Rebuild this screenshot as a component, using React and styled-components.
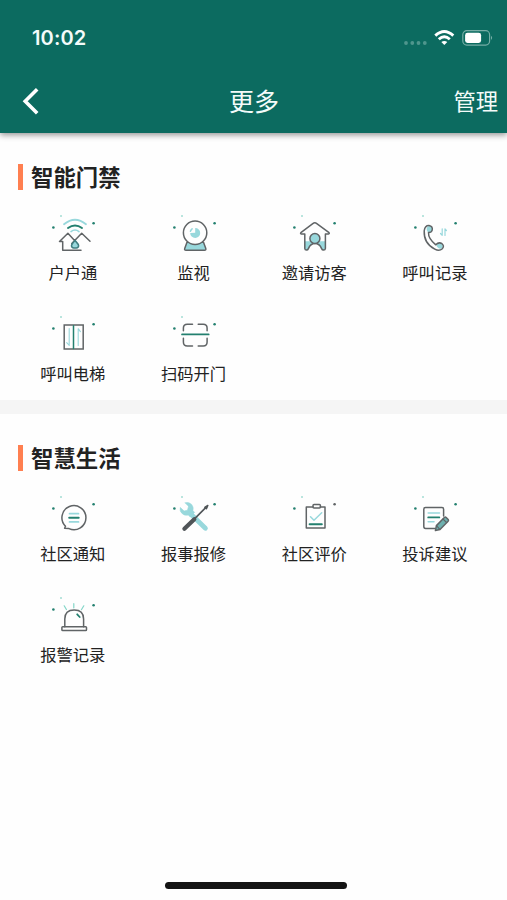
import React from 'react';
import styled, { createGlobalStyle } from 'styled-components';

const GlobalStyle = createGlobalStyle`
  * { box-sizing: border-box; }
  body {
    margin: 0;
    background: #fefefe;
    font-family: 'Noto Sans CJK SC', sans-serif;
    color: #222;
  }
`;

const LINE = '#606466';
const TEAL = '#98d8dc';
const GREEN = '#23806f';

const Screen = styled.div`
  width: 507px;
  height: 900px;
  display: flex;
  flex-direction: column;
  overflow: hidden;
  background: #fefefe;
`;

const Header = styled.header`
  flex: none;
  height: 133px;
  background: #0c6b60;
  color: #f4fbfa;
  box-shadow: 0 2px 6px rgba(0, 0, 0, 0.42);
  z-index: 1;
`;

const StatusBar = styled.div`
  height: 70px;
  padding: 6px 14px 0 32px;
  display: flex;
  align-items: center;
  justify-content: space-between;
`;

const Clock = styled.span`
  font: 600 20px/24px Inter, sans-serif;
  letter-spacing: 0.15px;
`;

const StatusIcons = styled.svg`
  display: block;
  width: 90px;
  height: 20px;
`;

const NavBar = styled.div`
  height: 60px;
  padding: 0 9px 0 22px;
  display: grid;
  grid-template-columns: 1fr auto 1fr;
  align-items: center;
`;

const BackIcon = styled.svg`
  display: block;
  width: 20px;
  height: 30px;
  margin-top: 1px;
`;

const PageTitle = styled.h1`
  margin: 0 0 0 -12px;
  font-size: 25px;
  line-height: 36px;
  font-weight: 400;
`;

const ManageButton = styled.button`
  justify-self: end;
  border: 0;
  padding: 0;
  background: none;
  color: inherit;
  font: 400 22.3px/32px 'Noto Sans CJK SC', sans-serif;
`;

const Section = styled.section`
  flex: none;
  padding: 31px 12.5px 0;
  height: ${(p) => (p.$last ? 'auto' : '267px')};
`;

const Divider = styled.div`
  flex: none;
  height: 14px;
  background: #f5f5f5;
`;

const SectionTitle = styled.h2`
  display: flex;
  align-items: center;
  gap: 8px;
  height: 26px;
  margin: 0 0 20px 5.5px;
  font-size: 22.4px;
  line-height: 26px;
  font-weight: 700;

  &::before {
    content: '';
    width: 5px;
    height: 26px;
    background: #ff7f50;
  }
`;

const TitleText = styled.span`
  margin-top: -2px;
`;

const Grid = styled.div`
  display: grid;
  grid-template-columns: repeat(4, 120.7px);
  grid-auto-rows: 101px;
`;

const Item = styled.div`
  display: flex;
  flex-direction: column;
  align-items: center;
`;

const ItemIcon = styled.svg`
  display: block;
  width: 48px;
  height: 44px;
  overflow: visible;
  fill: none;
  stroke: ${LINE};
  stroke-width: 1.5;
  stroke-linecap: round;
  stroke-linejoin: round;
`;

const Label = styled.span`
  margin-top: 5.5px;
  font-size: 16.3px;
  line-height: 24px;
  white-space: nowrap;
`;

const HomeArea = styled.div`
  margin-top: auto;
  height: 18px;
  flex: none;
  display: flex;
  justify-content: center;
`;

const HomeIndicator = styled.div`
  width: 182px;
  height: 6.5px;
  margin-left: 4px;
  border-radius: 4px;
  background: #141414;
`;

const drawings = {
  household: (
    <>
      <path d="M15 14.3Q26 5.2 37 14.3" stroke={TEAL} strokeWidth="1.8" />
      <path d="M19 18Q26 12.8 33 18" stroke={GREEN} strokeWidth="2" />
      <path d="M22 21.6Q26 18.4 30 21.6" stroke={TEAL} strokeWidth="1.6" />
      <path d="M13.7 31.5H10.5L18.9 23.2L26 31M22.8 33.4L32.7 23.2L41 31.3M13.7 31.5V40.3H32" />
      <path d="M26 30.5C24.5 32.3 22.5 34 22.5 35.6C22.5 36.7 23.4 38 24.8 38H27.4C28.8 38 29.6 36.8 29.6 35.6C29.6 34 27.5 32.3 26 30.5Z" fill={TEAL} stroke="#407e80" />
    </>
  ),
  camera: (
    <>
      <path d="M17 32.2H33.5L35.8 38.6Q36.2 40.3 34.5 40.3H16Q14.2 40.3 14.7 38.6Z" fill={TEAL} />
      <circle cx="25.1" cy="22.8" r="11.7" fill="#fefefe" />
      <path d="M25.2 18A5 5 0 1 1 20.2 23L25.2 22.7Z" fill={TEAL} stroke="none" />
      <path d="M22.1 18.8A5 5 0 0 0 20.4 21.3" stroke={TEAL} />
    </>
  ),
  visitor: (
    <>
      <path d="M14.8 31.2H35.3V39.2Q33.5 41 31.7 39Q29.5 33.8 25 33.8Q20.3 33.8 18.3 39Q16.5 41.2 14.8 39.2Z" fill={TEAL} stroke="none" />
      <path d="M14.8 24H11.4Q9.8 23.6 11.2 22.3L22.8 13.6Q24.8 12.1 26.8 13.6L38.7 22.3Q40 23.6 38.4 24H35.4V38.5Q35.2 40.2 33.5 40.1Q32.2 40 31.6 38.6Q29.5 33.6 25 33.6Q20.5 33.6 18.4 38.6Q17.8 40 16.5 40.1Q14.9 40.1 14.8 38.5Z" />
      <circle cx="24.9" cy="28.5" r="5" fill={TEAL} />
    </>
  ),
  call: (
    <>
      <path d="M17 16.3A3.2 3.2 0 1 1 16.8 22Q14.4 19 17 16.3ZM25.2 35.2Q28.5 31.9 31.2 34.6Q32.8 37 30.3 38.6Q27 39.2 25.2 35.2Z" fill={TEAL} stroke="none" />
      <path d="M13.2 20.8Q14 15.3 18 15.5Q22 16.2 21.2 20.1Q20.4 22.8 17.5 22.6Q17.2 28.6 24.8 34.8Q27.8 31.6 31 33.7Q33.7 36 31.3 38.8Q28.3 41.6 23.8 39.2Q12.6 33.5 13.2 20.8Z" />
      <path d="M31.2 18.8V25.3L29.5 23.5M34 25.5V18.8L35.4 20.5" stroke={TEAL} strokeWidth="1.2" />
    </>
  ),
  elevator: (
    <>
      <path d="M15.2 14.1H34.2V38H15.2Z" strokeLinejoin="miter" />
      <path d="M24.5 14.7V37.4" stroke={GREEN} />
      <path d="M20.2 17.5V34.4L17.7 31.7M29.2 34.5V17.7L31.4 20.6" stroke={TEAL} strokeWidth="1.1" />
    </>
  ),
  scan: (
    <>
      <path d="M22.5 13.2H17.3Q13.4 13.2 13.4 17V19.8M28.2 13.2H33.2Q37.1 13.2 37.1 17V19.8M13.4 27.3V31Q13.4 35 17.3 35H22.5M28.2 35H33.2Q37.1 35 37.1 31V27.3" />
      <path d="M12 23.4H38.7" stroke={GREEN} strokeWidth="1.7" />
    </>
  ),
  notice: (
    <>
      <path d="M16.5 35.2A12 12 0 1 1 20 37.6L15.6 37.2Z" />
      <path d="M20.5 22.7H29.5M20.5 30.9H29.5" stroke={TEAL} strokeWidth="1.7" />
      <path d="M20.2 26.7H29.7" stroke={GREEN} strokeWidth="2" />
    </>
  ),
  repair: (
    <>
      <path d="M21 23.2L35.4 37.3" stroke={TEAL} strokeWidth="4.8" />
      <path
        d="M15.2 11.7Q19 10.6 21.6 13.4Q23.9 16 22.9 19.6L24.6 21.4L20.2 25.8L18.2 24.1Q14.6 25 12 22.4Q9.4 19.9 10.3 16.4L14.1 20L17.5 19.2L18.5 15.4Z"
        fill={TEAL}
        stroke={TEAL}
        strokeWidth="0.6"
      />
      <path d="M24.2 28.2L36.5 15.8" stroke="#505558" strokeWidth="1.7" />
      <path d="M34.8 16.3L37.8 14.5L36.4 17.8Z" fill="#505558" stroke="#505558" />
      <path d="M14.4 37.8L24.3 28.3" stroke="#505558" strokeWidth="4.2" />
    </>
  ),
  review: (
    <>
      <path d="M23 16H16.3V37H35V16H30.3" />
      <rect x="23" y="13.6" width="7.4" height="3.5" rx="1" />
      <path d="M20.5 25.7L24 29.2L31.7 21.8" stroke={TEAL} />
      <path d="M19.6 33.3H31.8" stroke={GREEN} strokeWidth="2" />
    </>
  ),
  complaint: (
    <>
      <path d="M32.6 25V18.3Q32.6 16.6 31 16.6H14.5Q12.8 16.6 12.8 18.3V35.6Q12.8 37.4 14.5 37.4H24" />
      <path d="M17.2 22H28.5M17.2 30.7H23" stroke={TEAL} strokeWidth="1.6" />
      <path d="M17.2 26.4H28.3" stroke={GREEN} strokeWidth="1.8" />
      <path d="M24.4 39.6L25.4 34.6L33.6 26.3Q34.4 25.7 35.2 26.5L37.2 28.5Q37.9 29.3 37.1 30.2L29 38.5Z" fill="#6db0ae" />
      <path d="M25.5 34.7L28.8 38.3M32 28L35.5 31.5" strokeWidth="1.1" />
    </>
  ),
  alarm: (
    <>
      <path d="M15.8 34.7V27Q15.8 18 25.2 18Q34.6 18 34.6 27V34.7" />
      <rect x="12.9" y="34.7" width="24.6" height="3.9" rx="0.8" />
      <path d="M15.2 13.8L17.4 17.5M24.8 11.7V15.8M34.8 13.8L32.4 17.7" stroke="#83d6c8" strokeWidth="1.2" />
      <path d="M28.2 22.3L30.7 25" stroke={GREEN} strokeWidth="1.8" />
    </>
  ),
};

const accessItems = [
  ['household', '户户通'],
  ['camera', '监视'],
  ['visitor', '邀请访客'],
  ['call', '呼叫记录'],
  ['elevator', '呼叫电梯'],
  ['scan', '扫码开门'],
];

const lifeItems = [
  ['notice', '社区通知'],
  ['repair', '报事报修'],
  ['review', '社区评价'],
  ['complaint', '投诉建议'],
  ['alarm', '报警记录'],
];

function FeatureGrid({ items }) {
  return (
    <Grid>
      {items.map(([icon, label]) => (
        <Item key={icon}>
          <ItemIcon viewBox="0 0 48 44">
            <g stroke="none">
              <circle cx="4.4" cy="17.5" r="1.3" fill={GREEN} />
              <circle cx="12" cy="6.1" r="1" fill="#a3ddd3" />
              <circle cx="44.6" cy="13.2" r="1.3" fill={icon === 'review' ? LINE : GREEN} />
            </g>
            {drawings[icon]}
          </ItemIcon>
          <Label>{label}</Label>
        </Item>
      ))}
    </Grid>
  );
}

export default function App() {
  return (
    <>
      <GlobalStyle />
      <Screen>
        <Header>
          <StatusBar>
            <Clock>10:02</Clock>
            <StatusIcons viewBox="0 0 90 20">
              <g fill="#4f968d">
                <circle cx="3" cy="15" r="1.9" />
                <circle cx="9.3" cy="15" r="1.9" />
                <circle cx="15.5" cy="15" r="1.9" />
                <circle cx="21.8" cy="15" r="1.9" />
              </g>
              <g fill="none" stroke="#fff" strokeWidth="2.9">
                <path d="M32.3 7.6Q41.3 -0.8 50.3 7.6" />
                <path d="M35.8 11.2Q41.3 6.2 46.8 11.2" />
              </g>
              <path d="M38.3 14.1Q41.3 11.7 44.3 14.1L41.3 17.1Z" fill="#fff" />
              <rect x="59.8" y="2.7" width="26.8" height="14.4" rx="4" fill="none" stroke="#76aea6" strokeWidth="1.2" />
              <rect x="62.1" y="4.8" width="16" height="10.2" rx="2.4" fill="#fff" />
              <path d="M88 7.7Q90.3 9.8 88 12Z" fill="#76aea6" />
            </StatusIcons>
          </StatusBar>
          <NavBar>
            <BackIcon viewBox="0 0 20 30" fill="none" stroke="#fff" strokeWidth="3.6">
              <path d="M15.2 3.2L3.2 15.3L15.2 27.3" />
            </BackIcon>
            <PageTitle>更多</PageTitle>
            <ManageButton>管理</ManageButton>
          </NavBar>
        </Header>
        <Section>
          <SectionTitle><TitleText>智能门禁</TitleText></SectionTitle>
          <FeatureGrid items={accessItems} />
        </Section>
        <Divider />
        <Section $last>
          <SectionTitle><TitleText>智慧生活</TitleText></SectionTitle>
          <FeatureGrid items={lifeItems} />
        </Section>
        <HomeArea>
          <HomeIndicator />
        </HomeArea>
      </Screen>
    </>
  );
}
